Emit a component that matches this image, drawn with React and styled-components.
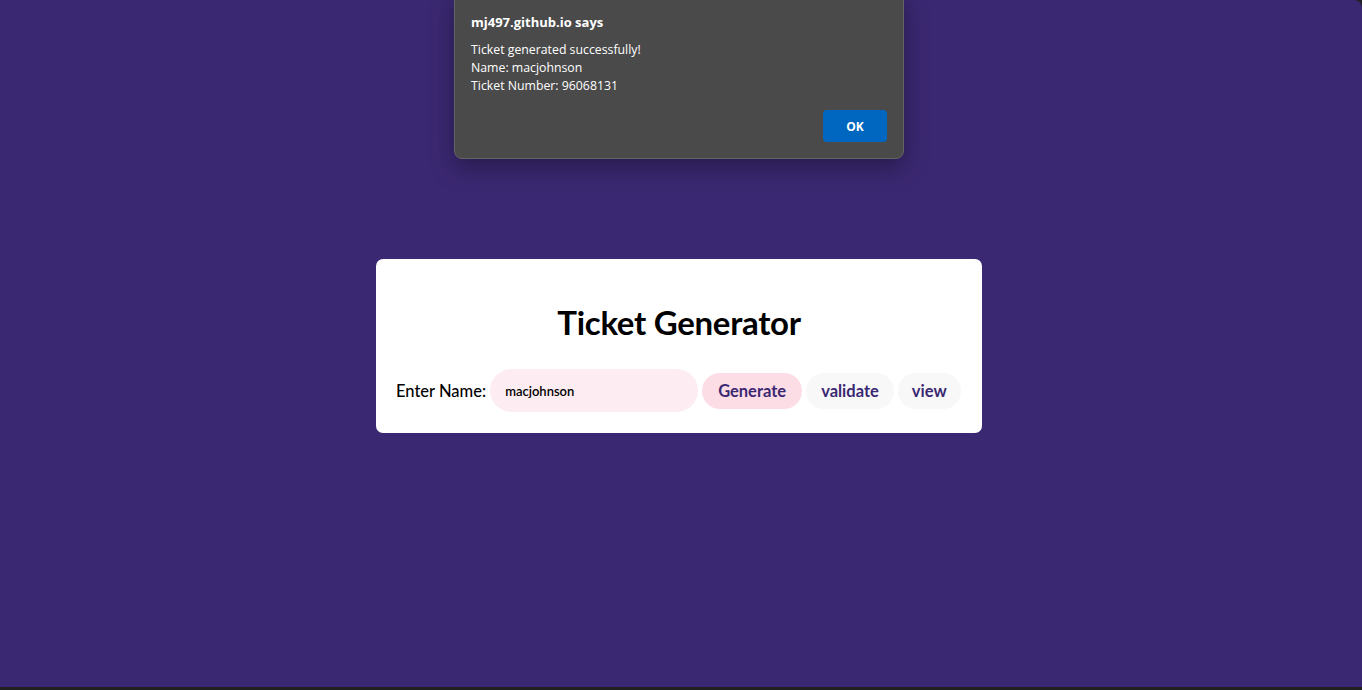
import React, { useState } from 'react';
import styled, { createGlobalStyle } from 'styled-components';

const Global = createGlobalStyle`
  html, body {
    margin: 0;
    padding: 0;
    height: 100%;
  }
  body {
    background: #202020;
    font-family: "Lato", "Liberation Sans", sans-serif;
  }
`

const Page = styled.div`
  position: relative;
  height: 687px;
  background: #3b2872;
  display: flex;
  align-items: center;
  justify-content: center;
  border-top-right-radius: 8px;
  overflow: hidden;
`

const Card = styled.div`
  box-sizing: border-box;
  width: 606px;
  height: 174px;
  margin-left: -4px;
  margin-top: 5px;
  background: #fff;
  border-radius: 7px;
  padding: 38px 20px 0;
  display: flex;
  flex-direction: column;
  align-items: center;
`

const Title = styled.h1`
  margin: 0 0 22px;
  font-size: 33px;
  font-weight: 700;
  color: #000;
  letter-spacing: -0.3px;
  line-height: 50px;
`

const Row = styled.div`
  align-self: stretch;
  display: flex;
  align-items: center;
  gap: 4px;
`

const Label = styled.label`
  font-size: 16.5px;
  font-weight: 500;
  color: #000;
`

const NameInput = styled.input`
  box-sizing: border-box;
  width: 208px;
  height: 43px;
  border: none;
  outline: none;
  border-radius: 22px;
  background: #fdedf2;
  padding: 0 15px;
  font-family: inherit;
  font-size: 13px;
  font-weight: 600;
  color: #000;
`

const Button = styled.button`
  height: 36px;
  border: none;
  border-radius: 18px;
  padding: 0 ${p => p.$pad}px;
  background: ${p => p.$primary ? '#fcdde6' : '#f8f8f8'};
  color: #3b2872;
  font-family: inherit;
  font-size: 16.5px;
  font-weight: 700;
  cursor: pointer;
`

const Dialog = styled.div`
  position: absolute;
  top: -8px;
  left: 454px;
  box-sizing: border-box;
  width: 450px;
  height: 167px;
  background: #4a4a4a;
  border: 1px solid #646464;
  border-radius: 8px;
  box-shadow: 0 8px 24px rgba(0, 0, 0, 0.35);
  padding: 20px 16px 0 16px;
  color: #fff;
  font-family: "Open Sans", "Noto Sans", sans-serif;
  display: flex;
  flex-direction: column;
`

const DialogTitle = styled.div`
  font-size: 13px;
  font-weight: 700;
  line-height: 18px;
  margin-bottom: 10px;
`

const DialogText = styled.div`
  font-size: 12.3px;
  line-height: 18px;
`

const DialogActions = styled.div`
  display: flex;
  justify-content: flex-end;
  margin-top: 15px;
`

const OkButton = styled.button`
  width: 64px;
  height: 32px;
  border: none;
  border-radius: 4px;
  background: #0067c0;
  color: #fff;
  font-family: inherit;
  font-size: 12px;
  font-weight: 700;
`

export default function App() {
  const [name, setName] = useState('macjohnson');

  return (
    <>
      <Global />
      <Page>
        <Card>
          <Title>Ticket Generator</Title>
          <Row>
            <Label>Enter Name:</Label>
            <NameInput value={name} onChange={e => setName(e.target.value)} />
            <Button $primary $pad={16}>Generate</Button>
            <Button $pad={15}>validate</Button>
            <Button $pad={14}>view</Button>
          </Row>
        </Card>
        <Dialog>
          <DialogTitle>mj497.github.io says</DialogTitle>
          <DialogText>
            Ticket generated successfully!<br />
            Name: {name}<br />
            Ticket Number: 96068131
          </DialogText>
          <DialogActions>
            <OkButton>OK</OkButton>
          </DialogActions>
        </Dialog>
      </Page>
    </>
  )
}
